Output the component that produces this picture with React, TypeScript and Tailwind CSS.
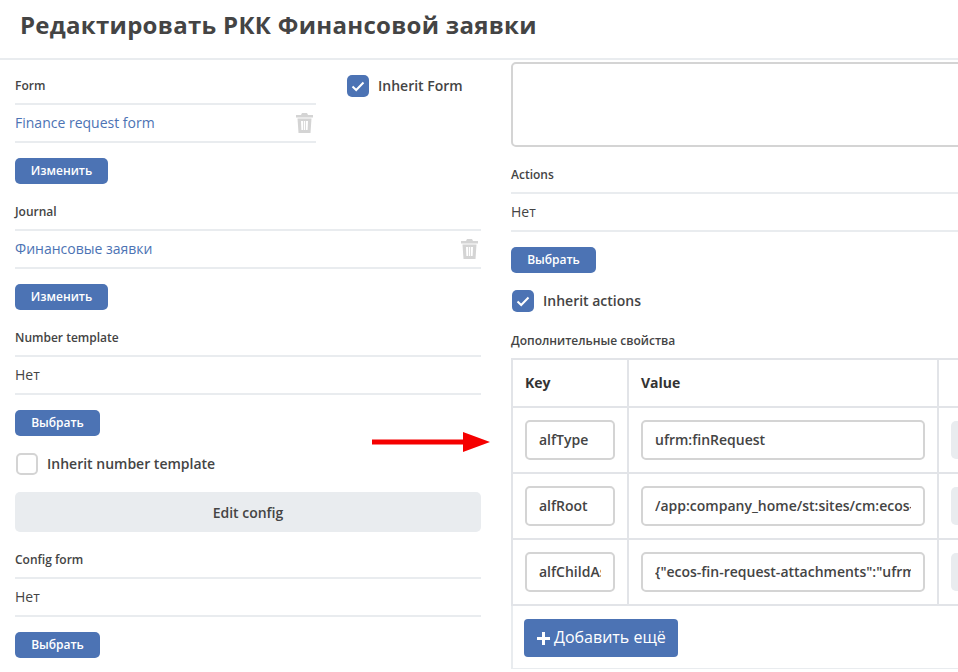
const blue = "bg-[#4c73b4]"

function Trash() {
  return (
    <svg width="17" height="20" viewBox="0 0 17 20" className="shrink-0">
      <path d="M6 0h5l1 2h5v2.500H0V2h5z" fill="#d4d4d4" />
      <path
        fillRule="evenodd"
        d="M1.500 5.500h14L14.500 20h-12zM5 8l.4 9h1.600V8zM7.800 8v9h1.400V8zM10 8v9h1.600L12 8z"
        fill="#d4d4d4"
      />
    </svg>
  )
}

function Checkbox({ checked, label }: { checked: boolean; label: string }) {
  return (
    <div className="flex items-center gap-[9px]">
      {checked ? (
        <div className={`w-[22px] h-[22px] rounded-[5px] ${blue} flex items-center justify-center`}>
          <svg width="14" height="11" viewBox="0 0 14 11">
            <path d="M1.500 5.500L5.200 9L12.500 1.500" fill="none" stroke="#fff" strokeWidth="2" />
          </svg>
        </div>
      ) : (
        <div className="w-[22px] h-[22px] rounded-[5px] border-2 border-[#d4d4d4] bg-white" />
      )}
      <span className="text-sm font-semibold text-[#444]">{label}</span>
    </div>
  )
}

function Btn({ text, w }: { text: string; w: string }) {
  return (
    <button
      className={`block h-[26px] ${w} ${blue} rounded-[5px] text-xs font-semibold text-white text-center`}
    >
      {text}
    </button>
  )
}

function Field({
  label,
  value,
  link,
  trash,
  btn,
  btnW,
}: {
  label: string
  value: string
  link?: boolean
  trash?: boolean
  btn: string
  btnW: string
}) {
  return (
    <div>
      <div className="h-[18px] mb-[9px] text-xs font-semibold leading-[20px] text-[#444]">{label}</div>
      <div className="h-[40px] border-y-2 border-[#e9ecef] flex items-center justify-between">
        <span className={`text-sm ${link ? "text-[#4c73b4]" : "text-[#444]"}`}>{value}</span>
        {trash && (
          <span className="mr-[3px]">
            <Trash />
          </span>
        )}
      </div>
      <div className="mt-[15px]">
        <Btn text={btn} w={btnW} />
      </div>
    </div>
  )
}

function Cell({ children }: { children: React.ReactNode }) {
  return <td className="border-2 border-[#e2e4e8] px-[12px] py-0 align-middle">{children}</td>
}

const inputCls =
  "block h-[40px] rounded-[5px] border-2 border-[#d4d4d4] px-[12px] pb-[2px] text-sm font-semibold text-[#444] bg-white outline-none"

const rows = [
  { k: "alfType", v: "ufrm:finRequest" },
  { k: "alfRoot", v: "/app:company_home/st:sites/cm:ecos-fin-request/cm:documentLibrary" },
  { k: "alfChildAssocs", v: '{"ecos-fin-request-attachments":"ufrm:attachments"}' },
]

export default function App() {
  return (
    <div className="relative w-[958px] h-[672px] overflow-hidden bg-white font-['Open_Sans',sans-serif] text-[#444]">
      <div className="h-[60px] border-b-2 border-[#e9ecef] pl-[20px] flex items-center">
        <h1 className="text-[24px] font-bold tracking-[0.29px] text-[#444] whitespace-nowrap -mt-[8px]">
          Редактировать РКК Финансовой заявки
        </h1>
      </div>

      <div className="flex gap-[30px] pl-[15px]">
        {/* левая колонка */}
        <div className="w-[466px] shrink-0 pt-[16px] flex flex-col gap-[18px]">
          <div className="relative">
            <div className="w-[301px]">
              <Field label="Form" value="Finance request form" link trash btn="Изменить" btnW="w-[93px]" />
            </div>
            <div className="absolute left-[332px] -top-[1px]">
              <Checkbox checked label="Inherit Form" />
            </div>
          </div>
          <Field label="Journal" value="Финансовые заявки" link trash btn="Изменить" btnW="w-[93px]" />
          <div>
            <Field label="Number template" value="Нет" btn="Выбрать" btnW="w-[85px]" />
            <div className="mt-[17px] ml-[1px]">
              <Checkbox checked={false} label="Inherit number template" />
            </div>
            <button className="block w-full h-[40px] mt-[17px] pt-[2px] rounded-[5px] bg-[#e9ecef] text-sm font-semibold text-[#444]">
              Edit config
            </button>
          </div>
          <Field label="Config form" value="Нет" btn="Выбрать" btnW="w-[85px]" />
        </div>

        {/* правая колонка */}
        <div className="w-[560px] shrink-0 pt-[2px]">
          <div className="h-[85px] rounded-[5px] border-2 border-[#d4d4d4] mb-[18px]" />
          <Field label="Actions" value="Нет" btn="Выбрать" btnW="w-[85px]" />
          <div className="mt-[17px] ml-[1px]">
            <Checkbox checked label="Inherit actions" />
          </div>
          <div className="h-[18px] mt-[19px] mb-[9px] text-xs font-semibold leading-[20px] text-[#444]">
            Дополнительные свойства
          </div>
          <div className="border-x-2 border-b border-[#e9ecef]">
            <table className="w-full table-fixed border-collapse -ml-[2px]">
              <colgroup>
                <col className="w-[116px]" />
                <col className="w-[310px]" />
                <col />
              </colgroup>
              <thead>
                <tr className="h-[48px]">
                  <th className="border-2 border-[#e2e4e8] px-[12px] text-left text-sm font-bold text-[#333]">Key</th>
                  <th className="border-2 border-[#e2e4e8] px-[12px] text-left text-sm font-bold text-[#333]">Value</th>
                  <th className="border-2 border-[#e2e4e8]" />
                </tr>
              </thead>
              <tbody>
                {rows.map((r) => (
                  <tr key={r.k} className="h-[66px]">
                    <Cell>
                      <input readOnly value={r.k} className={`${inputCls} w-[90px]`} />
                    </Cell>
                    <Cell>
                      <input readOnly value={r.v} className={`${inputCls} w-[284px]`} />
                    </Cell>
                    <Cell>
                      <div className="h-[38px] w-[40px] -mt-[1px] rounded-[5px] bg-[#e9ecef]" />
                    </Cell>
                  </tr>
                ))}
              </tbody>
            </table>
            <div className="px-[11px] pt-[13px] pb-[11px]">
              <button className={`flex items-center h-[38px] w-[154px] pl-[13px] pb-[2px] ${blue} rounded-[4px] text-base text-white`}>
                <svg width="13" height="13" viewBox="0 0 13 13" className="mr-[4px] mt-[2px]">
                  <path d="M5 0h3v5h5v3H8v5H5V8H0V5h5z" fill="#fff" />
                </svg>
                Добавить ещё
              </button>
            </div>
          </div>
        </div>
      </div>

      {/* стрелка поверх страницы */}
      <svg width="120" height="24" viewBox="0 0 120 24" className="absolute left-[372px] top-[430px]">
        <path d="M0 9.500h91V2l27 10-27 10v-7.500H0z" fill="#f50000" />
      </svg>
    </div>
  )
}
